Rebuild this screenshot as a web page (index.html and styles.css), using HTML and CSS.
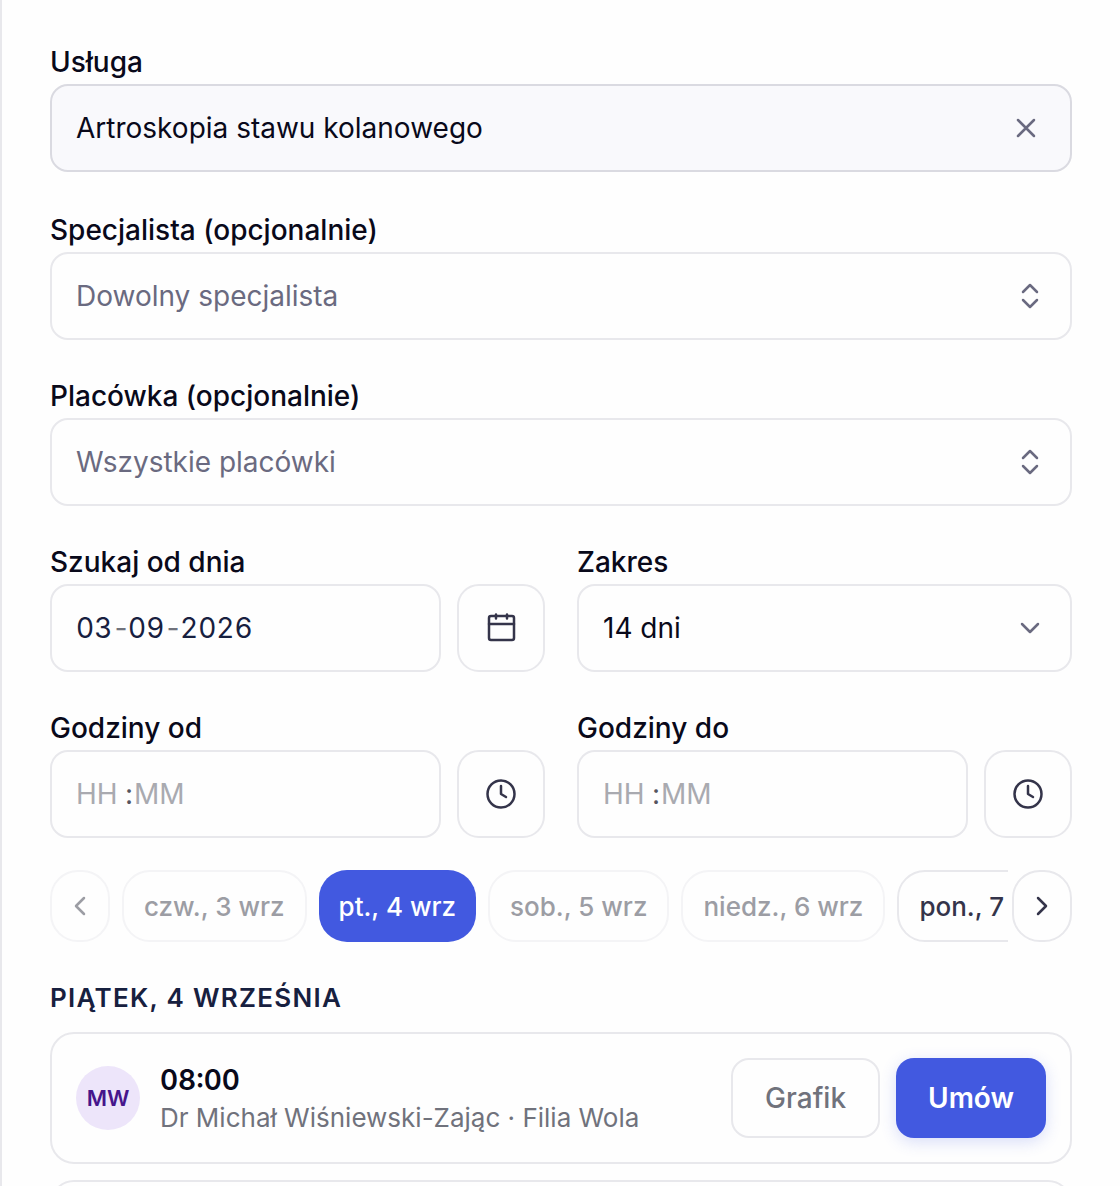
FILE: index.html
```html
<!DOCTYPE html>
<html lang="pl">
  <head>
    <meta charset="UTF-8" />
    <meta name="viewport" content="width=device-width, initial-scale=1.0" />
    <title>Wyszukiwanie terminu</title>
    <link rel="stylesheet" href="styles.css">
  </head>

  <body>
    <main class="panel">
      <form class="search">
        <div class="field field-service">
          <label for="service">Usługa</label>
          <div class="control control-filled">
            <input type="text" id="service" value="Artroskopia stawu kolanowego" />
            <button type="button" class="control-btn" aria-label="Wyczyść">
              <svg class="icon-clear" viewBox="0 0 28 28"><path d="M6 6l16 16M22 6L6 22" /></svg>
            </button>
          </div>
        </div>

        <div class="field">
          <label for="specialist">Specjalista (opcjonalnie)</label>
          <div class="control">
            <input type="text" id="specialist" placeholder="Dowolny specjalista" />
            <button type="button" class="control-btn" aria-label="Pokaż specjalistów">
              <svg class="icon-updown" viewBox="0 0 32 32"><path d="M9 12l7-7 7 7M9 20l7 7 7-7" /></svg>
            </button>
          </div>
        </div>

        <div class="field">
          <label for="facility">Placówka (opcjonalnie)</label>
          <div class="control">
            <input type="text" id="facility" placeholder="Wszystkie placówki" />
            <button type="button" class="control-btn" aria-label="Pokaż placówki">
              <svg class="icon-updown" viewBox="0 0 32 32"><path d="M9 12l7-7 7 7M9 20l7 7 7-7" /></svg>
            </button>
          </div>
        </div>

        <div class="columns">
          <div class="field">
            <label for="day">Szukaj od dnia</label>
            <div class="with-picker">
              <div class="control segments date">
                <input type="text" id="day" class="seg-two" value="03" />
                <span>-</span>
                <input type="text" class="seg-two" value="09" aria-label="Miesiąc" />
                <span>-</span>
                <input type="text" class="seg-four" value="2026" aria-label="Rok" />
              </div>
              <button type="button" class="picker" aria-label="Wybierz datę">
                <svg viewBox="0 0 32 32"><rect x="4" y="4" width="25" height="24" rx="2" /><path d="M4 12h25M11 2.5v4M22 2.5v4" /></svg>
              </button>
            </div>
          </div>

          <div class="field">
            <label for="range">Zakres</label>
            <div class="control select">
              <select id="range">
                <option>14 dni</option>
              </select>
              <svg class="icon-down" viewBox="0 0 32 32"><path d="M8 12l8 8 8-8" /></svg>
            </div>
          </div>

          <div class="field">
            <label for="from-hour">Godziny od</label>
            <div class="with-picker">
              <div class="control segments time">
                <input type="text" id="from-hour" class="seg-hour" placeholder="HH" />
                <span>:</span>
                <input type="text" class="seg-minute" placeholder="MM" aria-label="Minuty od" />
              </div>
              <button type="button" class="picker" aria-label="Wybierz godzinę od">
                <svg viewBox="0 0 32 32"><circle cx="16" cy="16" r="13.5" /><path d="M16 8v8l5 3" /></svg>
              </button>
            </div>
          </div>

          <div class="field">
            <label for="to-hour">Godziny do</label>
            <div class="with-picker">
              <div class="control segments time">
                <input type="text" id="to-hour" class="seg-hour" placeholder="HH" />
                <span>:</span>
                <input type="text" class="seg-minute" placeholder="MM" aria-label="Minuty do" />
              </div>
              <button type="button" class="picker" aria-label="Wybierz godzinę do">
                <svg viewBox="0 0 32 32"><circle cx="16" cy="16" r="13.5" /><path d="M16 8v8l5 3" /></svg>
              </button>
            </div>
          </div>
        </div>
      </form>

      <nav class="days" aria-label="Dni">
        <button type="button" class="arrow" aria-label="Poprzednie dni" disabled>
          <svg viewBox="0 0 28 28"><path d="M18 6l-8 8 8 8" /></svg>
        </button>
        <div class="days-list">
          <button type="button" class="day" disabled>czw., 3 wrz</button>
          <button type="button" class="day active">pt., 4 wrz</button>
          <button type="button" class="day" disabled>sob., 5 wrz</button>
          <button type="button" class="day" disabled>niedz., 6 wrz</button>
          <button type="button" class="day">pon., 7 wrz</button>
        </div>
        <button type="button" class="arrow" aria-label="Następne dni">
          <svg viewBox="0 0 28 28"><path d="M10 6l8 8-8 8" /></svg>
        </button>
      </nav>

      <h2>Piątek, 4 września</h2>

      <ul class="slots">
        <li class="slot">
          <span class="avatar">MW</span>
          <div class="slot-info">
            <strong>08:00</strong>
            <p>Dr Michał Wiśniewski-Zając · Filia Wola</p>
          </div>
          <button type="button" class="btn">Grafik</button>
          <button type="button" class="btn btn-primary">Umów</button>
        </li>
        <li class="slot"></li>
      </ul>
    </main>
  </body>
</html>
```

FILE: styles.css
```css
* {
  margin: 0;
  padding: 0;
  box-sizing: border-box;
}

:root {
  --text: #09091a;
  --navy: #17203f;
  --ink: #34344a;
  --muted: #6a6a80;
  --grey: #70727c;
  --border: #e8e8ec;
  --primary: #4259e0;
}

body {
  font-family: "Inter", sans-serif;
  font-size: 28px;
  color: var(--text);
  background-color: #fefefe;
}

button,
input,
select {
  font: inherit;
  color: inherit;
  border: none;
  outline: none;
  background: none;
}

button {
  cursor: pointer;
}

svg {
  display: block;
  fill: none;
  stroke: currentColor;
  stroke-width: 2.5;
  stroke-linecap: round;
  stroke-linejoin: round;
}

.panel {
  height: 100vh;
  padding: 40px 48px 0;
  border-left: 2px solid var(--border);
  overflow: hidden;
}

/* search form */

.search {
  display: flex;
  flex-direction: column;
  gap: 34px;
}

.field label {
  display: block;
  line-height: 44px;
  font-weight: 500;
}

.field-service {
  margin-bottom: 2px;
}

.columns {
  display: grid;
  grid-template-columns: 1fr 1fr;
  gap: 34px 32px;
}

.control {
  display: flex;
  align-items: center;
  flex: 1;
  min-width: 0;
  height: 88px;
  padding: 0 24px;
  border: 2px solid var(--border);
  border-radius: 18px;
}

.control input {
  flex: 1;
  min-width: 0;
}

.control input::placeholder {
  color: var(--muted);
  opacity: 1;
}

.control-filled {
  background-color: #f9f9fc;
  border-color: #dadae1;
}

.control-btn {
  color: var(--muted);
}

.icon-clear {
  width: 28px;
  height: 28px;
  margin-right: 6px;
}

.icon-updown,
.icon-down {
  width: 32px;
  height: 32px;
  color: var(--muted);
}

.select {
  display: grid;
  padding: 0;
}

.select select,
.select svg {
  grid-area: 1 / 1;
}

.select select {
  height: 84px;
  padding: 0 64px 0 24px;
  appearance: none;
}

.select svg {
  justify-self: end;
  margin-right: 24px;
  pointer-events: none;
}

.with-picker {
  display: flex;
  gap: 16px;
}

.picker {
  display: flex;
  align-items: center;
  justify-content: center;
  width: 88px;
  height: 88px;
  border: 2px solid var(--border);
  border-radius: 22px;
  color: var(--ink);
}

.picker svg {
  width: 32px;
  height: 32px;
}

.control.segments input {
  flex: none;
}

.date {
  color: var(--navy);
  letter-spacing: 1px;
  font-variant-numeric: tabular-nums;
}

.date span {
  width: 16px;
  text-align: center;
  color: var(--grey);
}

.seg-two {
  width: 36px;
}

.seg-four {
  width: 76px;
}

.time span {
  width: 9px;
  color: #55555f;
}

.control.time input::placeholder {
  color: #a9aab0;
}

.seg-hour {
  width: 49px;
}

.seg-minute {
  width: 60px;
}

/* day switcher */

.days {
  display: flex;
  gap: 4px;
  margin-top: 32px;
}

.days-list {
  display: flex;
  flex: 1;
  gap: 12px;
  min-width: 0;
  padding-left: 8px;
  overflow: hidden;
}

.day,
.arrow {
  flex: none;
  height: 72px;
  border: 2px solid var(--border);
  border-radius: 28px;
  font-size: 26px;
  font-weight: 500;
  color: var(--ink);
}

.day {
  padding: 0 20px;
}

.arrow {
  display: flex;
  align-items: center;
  justify-content: center;
  width: 60px;
}

.arrow svg {
  width: 28px;
  height: 28px;
}

.day:disabled,
.arrow:disabled {
  border-color: #f4f4f6;
  color: #9c9da4;
  cursor: default;
}

.day.active {
  border: none;
  background-color: var(--primary);
  color: white;
}

/* free slots */

h2 {
  margin: 36px 0 14px;
  font-size: 26px;
  font-weight: 600;
  line-height: 40px;
  letter-spacing: 0.05em;
  text-transform: uppercase;
  color: var(--navy);
}

.slots {
  display: grid;
  gap: 16px;
  list-style: none;
}

.slot {
  display: flex;
  align-items: center;
  gap: 16px;
  min-height: 132px;
  padding: 24px;
  border: 2px solid var(--border);
  border-radius: 24px;
}

.avatar {
  display: flex;
  align-items: center;
  justify-content: center;
  width: 64px;
  height: 64px;
  border-radius: 50%;
  background-color: #ede5fa;
  color: #46158c;
  font-size: 22px;
  font-weight: 600;
}

.slot-info {
  flex: 1;
  padding: 2px 0 0 4px;
  line-height: 38px;
}

.slot-info strong {
  display: block;
  font-weight: 600;
  font-variant-numeric: tabular-nums;
}

.slot-info p {
  font-size: 26px;
  color: var(--grey);
}

.btn {
  height: 80px;
  padding: 0 32px;
  border: 2px solid var(--border);
  border-radius: 18px;
  font-weight: 500;
  color: var(--grey);
}

.btn-primary {
  border: none;
  background-color: var(--primary);
  color: white;
  font-weight: 600;
  box-shadow: 0 4px 16px rgba(66, 89, 224, 0.2);
}
```
